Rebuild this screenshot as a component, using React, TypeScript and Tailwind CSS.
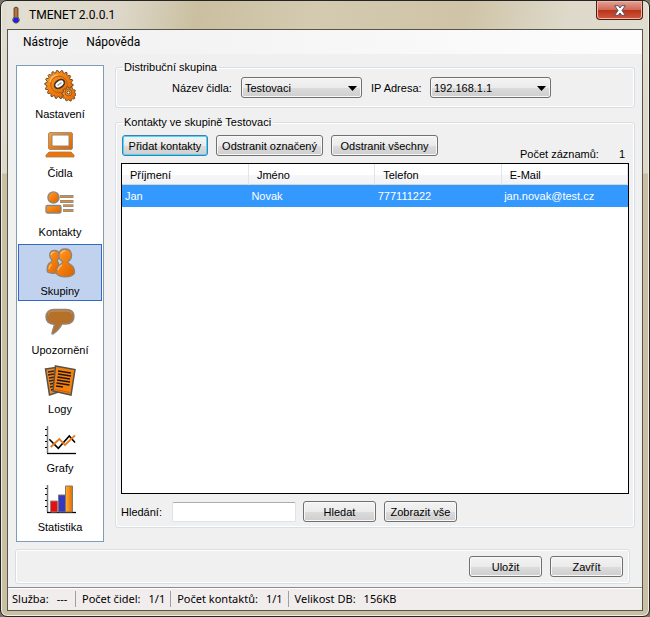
import React from "react";

const uiFont = "font-['Liberation_Sans',Arial,sans-serif]";
const menuFont = "font-['Roboto','Noto_Sans',sans-serif]";
const statusFont = "font-['Noto_Sans','Open_Sans',sans-serif]";

function Defs() {
  return (
    <svg width="0" height="0" className="absolute" aria-hidden="true">
      <defs>
        <linearGradient id="orange" x1="0" y1="0" x2="1" y2="1">
          <stop offset="0" stopColor="#ffa033" />
          <stop offset="0.5" stopColor="#f27d0c" />
          <stop offset="1" stopColor="#d96200" />
        </linearGradient>
        <linearGradient id="bar" x1="0" y1="0" x2="1" y2="0">
          <stop offset="0" stopColor="#ffb030" />
          <stop offset="1" stopColor="#e56a00" />
        </linearGradient>
      </defs>
    </svg>
  );
}

function Icon({ children }: { children: React.ReactNode }) {
  return (
    <svg width="32" height="32" viewBox="0 0 32 32" aria-hidden="true">
      {children}
    </svg>
  );
}

function gearPoints(cx: number, cy: number, outer: number, inner: number, teeth: number) {
  const points: string[] = [];
  for (let i = 0; i < teeth * 4; i++) {
    const radius = i % 4 < 2 ? outer : inner;
    const angle = (i / (teeth * 4)) * Math.PI * 2;
    points.push(`${(cx + radius * Math.cos(angle)).toFixed(2)},${(cy + radius * Math.sin(angle)).toFixed(2)}`);
  }
  return points.join(" ");
}

const Gears = () => (
  <Icon>
    <polygon points={gearPoints(15, 14.5, 14.2, 12.2, 18)} fill="url(#orange)" stroke="#6b4a2c" strokeWidth="1" />
    <circle cx="15" cy="14.5" r="8.300" fill="none" stroke="#b86014" strokeWidth="1" />
    <path d="M6 12c1-4 4-7 8-7" fill="none" stroke="#ffc27c" strokeWidth="1.200" />
    <ellipse cx="15.500" cy="14" rx="5.400" ry="3.600" transform="rotate(-35 15.500 14)" fill="#fff" stroke="#3d342e" strokeWidth="1.700" />
    <path d="m13.500 15.500 4-3" stroke="#999" strokeWidth="1.200" />
    <polygon points={gearPoints(25, 24, 7.2, 5.9, 10)} fill="url(#orange)" stroke="#6b4a2c" strokeWidth=".9" />
    <circle cx="24.500" cy="22.500" r="3.400" fill="#f79a3c" stroke="#8c4a12" strokeWidth=".8" />
    <circle cx="24.500" cy="22.500" r="1.500" fill="#fff" stroke="#5c3718" />
  </Icon>
);

const Laptop = () => (
  <Icon>
    <path d="M5.500 3.500h22l1 1v15l-1 1h-22l-1-1v-15z" fill="url(#orange)" stroke="#999086" />
    <path d="M8 6h17v11H8z" fill="#fff" stroke="#8f867c" />
    <path d="M5 23h22l3 3v2H2v-2z" fill="#ea750a" stroke="#a87c52" strokeWidth=".8" />
  </Icon>
);

const Contact = () => (
  <Icon>
    <g stroke="#858585" strokeWidth="1.300" fill="url(#orange)">
      <rect x="2" y="17.500" width="15" height="7.500" rx="1.500" />
      <circle cx="9.500" cy="9.500" r="5.600" />
    </g>
    <path d="M16 8.500h13.500M16 13.500h13.500M19 17.700h10.500M19 22.500h10.500" stroke="#8f8f8f" strokeWidth="2.800" />
    <path d="M16 8.500h13M16 13.500h13M19 17.700h10M19 22.500h10" stroke="#f28820" strokeWidth="1.200" />
  </Icon>
);

const People = () => (
  <Icon>
    <g fill="url(#orange)" stroke="#8f8274" strokeWidth="1.300">
      <path d="M8 13C4.500 10 5 3.500 10.500 3.500S17 10 13.500 13c-.5 1 0 2 1 3v9c-3 2-8 1.500-11 0C2.500 20 4 16.500 7 15q1-1 1-2z" />
      <path d="M18.500 14.500C13 11.500 13.500 2 21 2s8.500 9 3 12.500c-.5 1 0 1.500 1 2 4 2 6 5.500 5.300 10-3 4.500-15 4.500-18 0-.5-4.500 1.700-8 5.200-10q1.500-.8 1-2z" />
    </g>
    <path d="M17 7c.5-2 2.500-3.500 4.500-3M14 23c.5-2.500 2-4 4-5M7 8c.3-2 1.800-3 3.500-3M5 22c0-2 1-3.500 2.500-4.500" fill="none" stroke="#ffc078" strokeWidth="1.200" />
  </Icon>
);

const Speech = () => (
  <Icon>
    <path d="M10 3.500h12c5 0 8 2.500 8 7s-3 7.500-8 7.500h-4c-2 4-5 7.500-9 10-.8.3-1.300-.3-1-1l2.500-8.500C5 18 2 15.500 2 11s3-7.500 8-7.500z" fill="#b5702a" stroke="#8f877d" strokeWidth="1.400" />
    <path d="M4 9c1-3 3-4 6-4h12c3 0 5 1 6 3" fill="none" stroke="#cb9258" />
  </Icon>
);

const Logs = () => (
  <Icon>
    <g stroke="#55504a" strokeWidth="1.500">
      <path d="m1.500 4 13-2 3 24-12 4z" fill="#e88925" />
      <path d="m4 7 6-1M4 10l6-1M5 13l6-1M5 16l6-1M6 19l5-1M6 22l5-1M7 25l4-1" stroke="#3c220c" />
      <path d="m11.500 1 19.500 3.500L27 30 9 26z" fill="#f4800e" />
    </g>
    <path d="m14 6 13 2M14 9l13 2M13.500 12l12.500 2M13 15l13 2M12.500 18l13 2M12 21l7 1" stroke="#221509" strokeWidth="1.500" />
    <path d="m11 24.500 15 3" stroke="#d05d00" />
  </Icon>
);

const Axes = () => (
  <>
    <path d="M3.500 2v27" stroke="#777" strokeWidth="1.500" />
    <path d="M1 5.500h2M1 11.500h2M1 17.500h2M1 23.500h2" stroke="#000" />
    <path d="M3 29.500h29" stroke="#000" strokeWidth="1.300" />
  </>
);

const LineChart = () => (
  <Icon>
    <Axes />
    <path d="m5.300 15.300 9 9L25.300 12l5.700 6.500" fill="none" stroke="#000" strokeWidth="1.600" />
    <path d="m6.700 23 8.600-8 5.700 6 10-9.700" fill="none" stroke="#e87818" strokeWidth="1.800" />
  </Icon>
);

const BarChart = () => (
  <Icon>
    <Axes />
    <path d="M6.500 18h7v11h-7z" fill="#f00c0c" stroke="#888" />
    <path d="M14.500 12h7v17h-7z" fill="#3737c4" stroke="#777" />
    <path d="M21.500 3h7v26h-7z" fill="url(#bar)" stroke="#83786c" />
  </Icon>
);

const navItems = [
  { label: "Nastavení", icon: <Gears /> },
  { label: "Čidla", icon: <Laptop /> },
  { label: "Kontakty", icon: <Contact /> },
  { label: "Skupiny", icon: <People />, active: true },
  { label: "Upozornění", icon: <Speech /> },
  { label: "Logy", icon: <Logs /> },
  { label: "Grafy", icon: <LineChart /> },
  { label: "Statistika", icon: <BarChart /> },
];

const face = "bg-[linear-gradient(#f3f3f3,#ebebeb_50%,#dcdcdc_51%,#cecece)]";

function Button({ children, className = "w-[73px]", focused = false }: { children: React.ReactNode; className?: string; focused?: boolean }) {
  return (
    <button
      type="button"
      className={`h-[21px] shrink-0 whitespace-nowrap rounded-[3px] border text-center leading-[18px] ${face} ${className} ${
        focused ? "border-[#3c7fb1] shadow-[inset_0_0_0_1px_#48d8fb]" : "border-[#707070] shadow-[inset_0_0_0_1px_#f8f8f8]"
      }`}
    >
      {children}
    </button>
  );
}

function Select({ id, value }: { id: string; value: string }) {
  return (
    <div className="relative w-[121px]">
      <select id={id} defaultValue={value} className={`h-[21px] w-full appearance-none rounded-[3px] border border-[#707070] pl-[3px] shadow-[inset_0_0_0_1px_#f8f8f8] ${face}`}>
        <option>{value}</option>
      </select>
      <svg className="pointer-events-none absolute right-[5px] top-[9px]" width="9" height="5" aria-hidden="true">
        <path d="M0 0h9L4.500 5z" />
      </svg>
    </div>
  );
}

const group = "rounded-[3px] border border-[#d5dfe5] shadow-[inset_0_0_0_1px_#fff]";
const statusItem = "flex items-center gap-2 self-stretch border-r border-[#a0a0a0] pr-[5px]";

export default function App() {
  return (
    <div className="min-h-screen bg-[#77736a]">
      <Defs />
      <div className={`flex min-h-screen flex-col rounded-[7px] border border-[#242424] bg-[linear-gradient(#e0dccf,#ddd8c8_172px,#c9bfa2_173px,#c9bfa2)] px-[6px] pb-[5px] text-[11px] leading-[14px] text-black shadow-[inset_0_0_0_1px_#f1eee4] ${uiFont}`}>
        <header className="flex h-7 items-start justify-between bg-[linear-gradient(100deg,#e2dfd3,#dcd7c8_18%,#cabfa0_30%,#d4cab0_48%,#cfc4a7_72%,#ded9ca_88%,#e0dccf)]">
          <div className="flex h-7 items-center gap-2 pl-1">
            <svg width="10" height="18" viewBox="0 0 10 18" aria-hidden="true">
              <path d="M3 2q2-2 4 0v9q3 4-1 6H4q-4-2-1-6z" fill="#85705c" stroke="#4c4038" strokeWidth=".8" />
              <path d="M5 2v9" stroke="#d86c1b" strokeWidth="2" />
              <circle cx="5" cy="14" r="2.600" fill="#2020e8" />
            </svg>
            <h1 className={`text-[12px] ${menuFont}`}>TMENET 2.0.0.1</h1>
          </div>
          <button type="button" aria-label="Zavřít okno" className="flex h-[19px] w-[47px] items-center justify-center rounded-b-[4px] border border-t-0 border-[#4e1a15] bg-[linear-gradient(#e5a194,#cf6a57_48%,#b83218_50%,#cf5a3c)] shadow-[inset_0_0_0_1px_#eeb5a8]">
            <svg width="12" height="11" viewBox="0 0 12 11" aria-hidden="true">
              <path d="M.7.700h3.600L6 3l1.700-2.300h3.600L8 5.500l3.300 4.800H7.700L6 8l-1.700 2.300H.7L4 5.500z" fill="#fff" stroke="#505568" strokeWidth="1" />
            </svg>
          </button>
        </header>

        <div className="flex flex-1 flex-col border border-[#55564b] bg-[#f0f0f0]">
          <nav className={`flex h-6 items-center gap-[18px] bg-gradient-to-r from-[#f0f0f0] to-[#fdfdfd] px-[15px] text-[12px] ${menuFont}`}>
            <button type="button">Nástroje</button>
            <button type="button">Nápověda</button>
          </nav>

          <main className="flex flex-1 items-stretch gap-[11px] pl-2 pr-[7px] pt-[11px]">
            <nav className="flex w-[88px] shrink-0 flex-col gap-[2px] self-start border border-[#7f9db9] bg-white px-px pb-1 pt-px">
              {navItems.map((item) => (
                <button
                  key={item.label}
                  type="button"
                  className={`flex h-[57px] flex-col items-center gap-[5px] border pt-[2px] ${item.active ? "border-[#316ac5] bg-[#c1d2ee]" : "border-transparent"}`}
                >
                  {item.icon}
                  <span>{item.label}</span>
                </button>
              ))}
            </nav>

            <div className="-mt-[5px] mb-[14px] flex min-w-0 flex-1 flex-col gap-[7px]">
              <fieldset className={`px-[5px] pb-[9px] pt-[3px] ${group}`}>
                <legend className="ml-px px-[2px]">Distribuční skupina</legend>
                <div className="flex items-center pl-[51px]">
                  <label htmlFor="sensor" className="w-[69px]">Název čidla:</label>
                  <Select id="sensor" value="Testovaci" />
                  <label htmlFor="ip" className="ml-[9px] w-[59px]">IP Adresa:</label>
                  <Select id="ip" value="192.168.1.1" />
                </div>
              </fieldset>

              <fieldset className={`flex flex-1 flex-col px-[5px] pb-[5px] pt-[6px] ${group}`}>
                <legend className="ml-px px-[2px]">Kontakty ve skupině Testovaci</legend>
                <div className="flex h-7 items-start justify-between">
                  <div className="flex gap-2">
                    <Button focused className="ml-px w-[86px]">Přidat kontakty</Button>
                    <Button className="w-[107px]">Odstranit označený</Button>
                    <Button className="w-[107px]">Odstranit všechny</Button>
                  </div>
                  <div className="flex gap-5 self-end pb-[2px] pr-1">
                    <span>Počet záznamů:</span>
                    <span>1</span>
                  </div>
                </div>
                <div className="min-h-[331px] flex-1 border border-black bg-white">
                  <table className="w-full table-fixed border-collapse text-left">
                    <thead>
                      <tr className="h-[21px] bg-[linear-gradient(#fff_50%,#f5f6f8_51%,#f2f3f5)] shadow-[inset_0_-1px_0_#d5d5d5]">
                        {["Příjmení", "Jméno", "Telefon", "E-Mail"].map((name) => (
                          <th key={name} className="border-r border-[#e3e4e6] px-2 py-0 font-normal">{name}</th>
                        ))}
                      </tr>
                    </thead>
                    <tbody>
                      <tr className="h-[22px] bg-[#3399ff] text-white">
                        {["Jan", "Novak", "777111222", "jan.novak@test.cz"].map((value) => (
                          <td key={value} className="px-[3px] py-0">{value}</td>
                        ))}
                      </tr>
                    </tbody>
                  </table>
                </div>
                <div className="mt-[7px] flex items-center">
                  <label htmlFor="search" className="w-[51px]">Hledání:</label>
                  <input id="search" type="text" className="mr-[7px] h-5 w-[124px] rounded-[2px] border border-[#dfe2ea] border-t-[#abadb3] bg-white px-1" />
                  <div className="flex gap-2">
                    <Button>Hledat</Button>
                    <Button>Zobrazit vše</Button>
                  </div>
                </div>
              </fieldset>
            </div>
          </main>

          <div className={`mb-[3px] ml-[7px] mr-3 mt-[7px] flex h-[35px] items-center justify-end gap-2 px-[6px] ${group}`}>
            <Button>Uložit</Button>
            <Button>Zavřít</Button>
          </div>

          <footer className={`flex h-[23px] items-center gap-[6px] border-t border-[#8a8a8a] bg-[#f1eded] py-[3px] pl-1 text-[11px] shadow-[inset_0_1px_0_#fff] ${statusFont}`}>
            <span className={`min-w-16 ${statusItem}`}><span>Služba:</span><span>---</span></span>
            <span className={statusItem}><span>Počet čidel:</span><span>1/1</span></span>
            <span className={statusItem}><span>Počet kontaktů:</span><span>1/1</span></span>
            <span className="flex gap-2"><span>Velikost DB:</span><span>156KB</span></span>
          </footer>
        </div>
      </div>
    </div>
  );
}
